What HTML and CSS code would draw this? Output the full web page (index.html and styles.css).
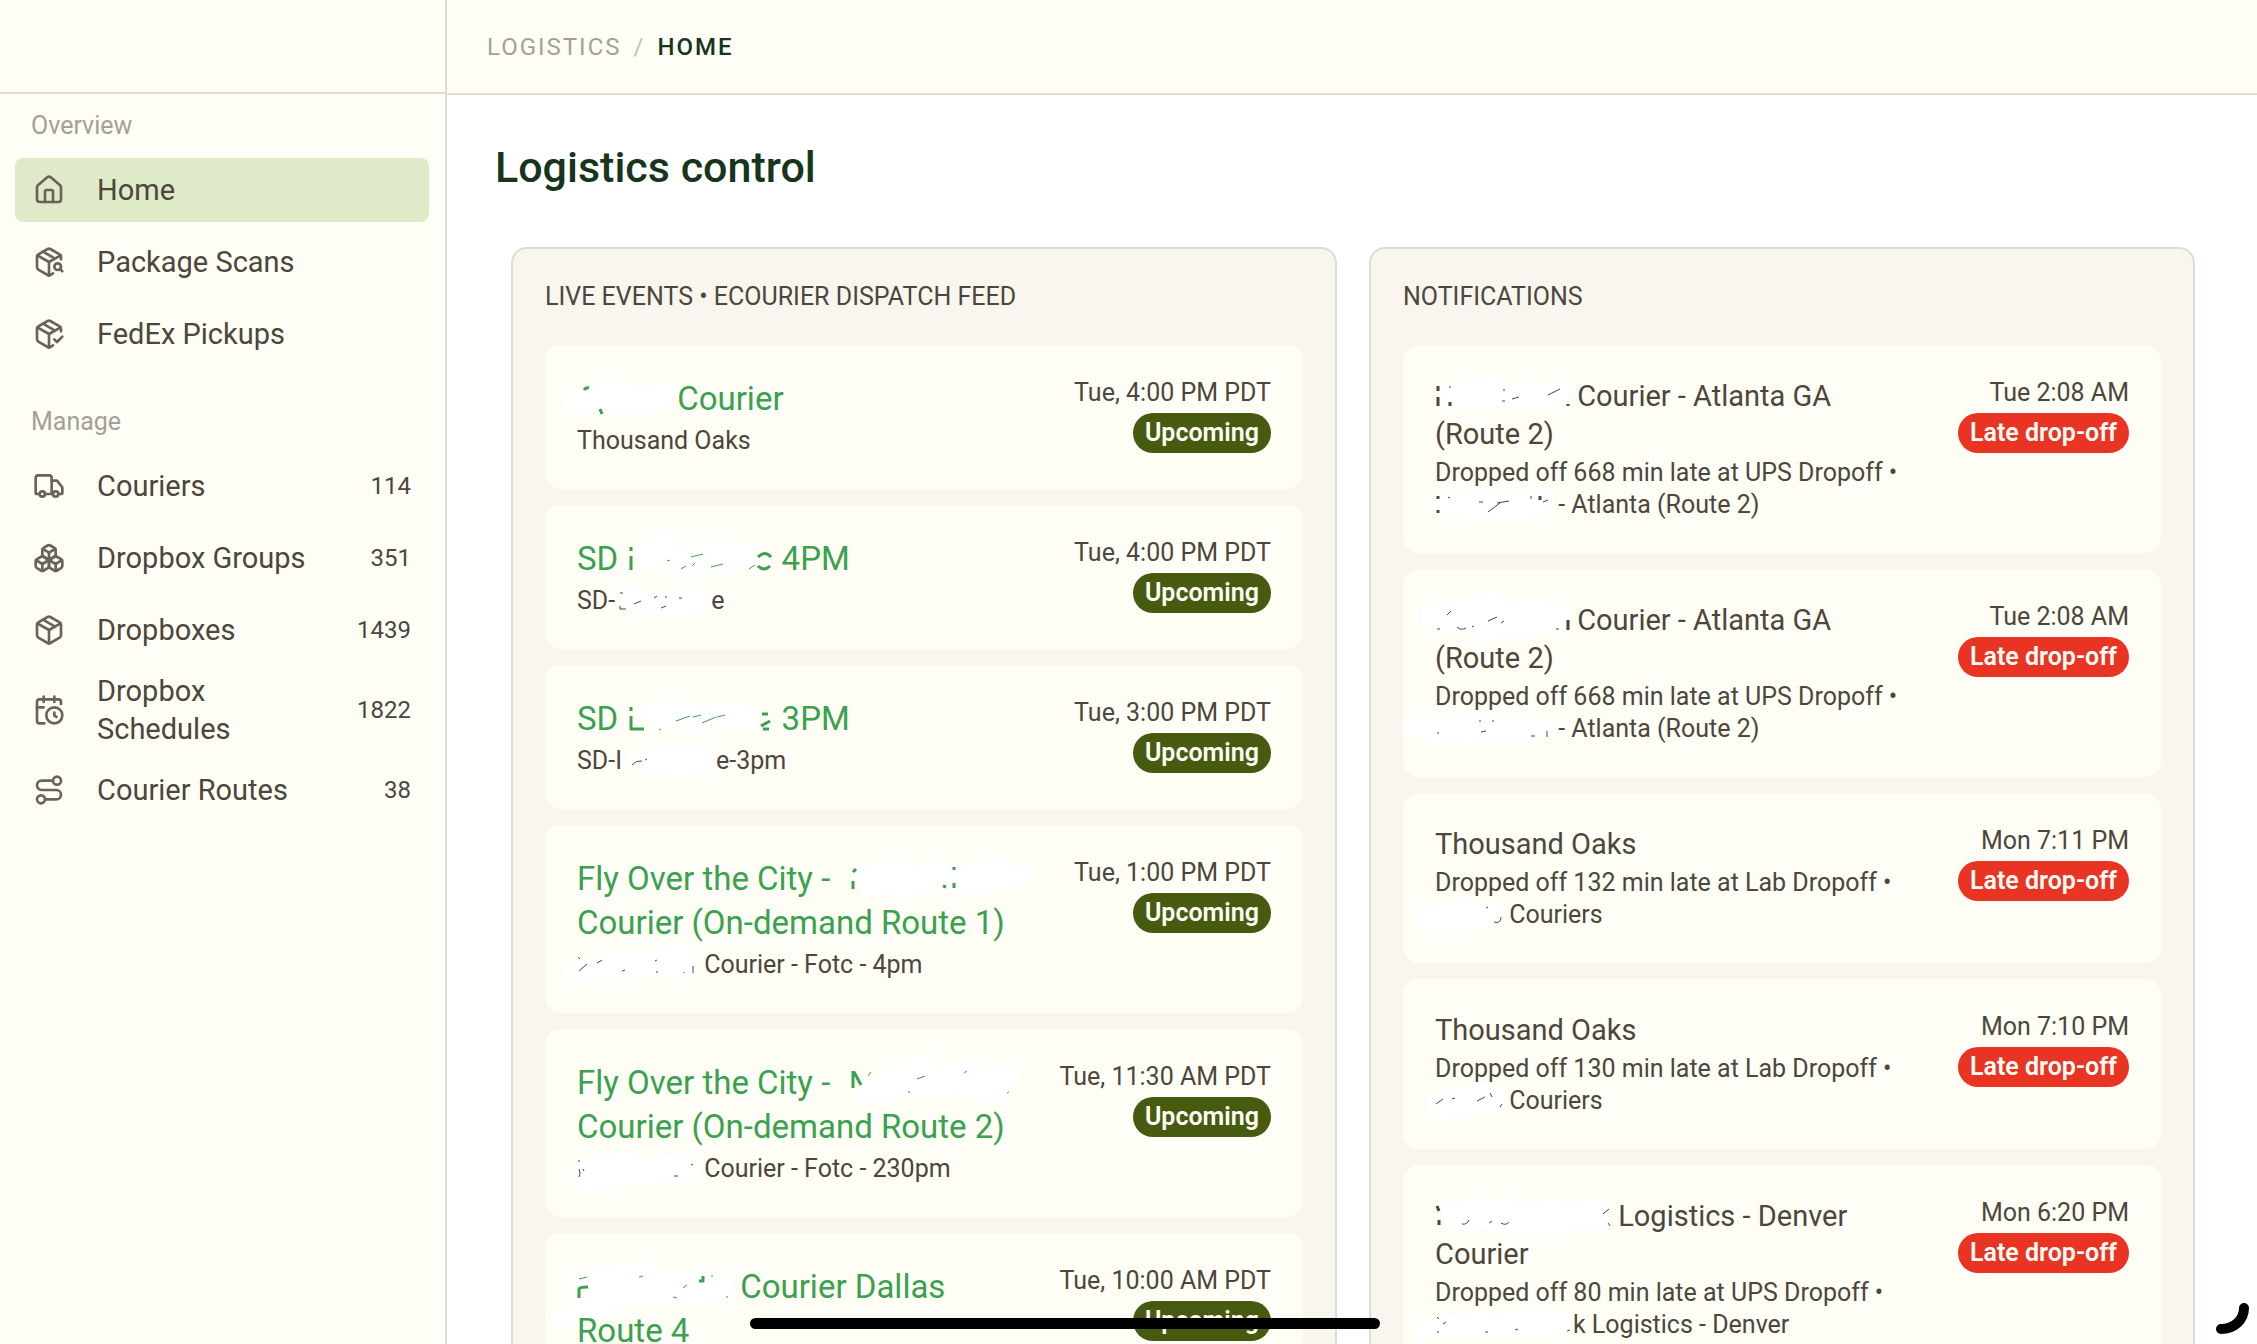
FILE: index.html
```html
<!DOCTYPE html>
<html lang="en">
<head>
    <meta charset="UTF-8">
    <meta name="viewport" content="width=device-width, initial-scale=1.0">
    <title>Logistics control</title>
    <link rel="stylesheet" href="styles.css">
</head>
<body>
    <aside class="sidebar">
        <div class="sidebar-head"></div>
        <nav class="menu">
            <h2 class="menu-title">Overview</h2>
            <a class="menu-item active" href="#home">
                <svg class="icon" viewBox="0 0 24 24"><path d="M15 21v-8a1 1 0 0 0-1-1h-4a1 1 0 0 0-1 1v8"/><path d="M3 10a2 2 0 0 1 .709-1.528l7-6a2 2 0 0 1 2.582 0l7 6A2 2 0 0 1 21 10v9a2 2 0 0 1-2 2H5a2 2 0 0 1-2-2z"/></svg>
                <span class="menu-label">Home</span>
            </a>
            <a class="menu-item" href="#scans">
                <svg class="icon" viewBox="0 0 24 24"><path d="M21 10V8a2 2 0 0 0-1-1.73l-7-4a2 2 0 0 0-2 0l-7 4A2 2 0 0 0 3 8v8a2 2 0 0 0 1 1.73l7 4a2 2 0 0 0 2 0l2-1.14"/><path d="m7.5 4.27 9 5.15"/><path d="M3.29 7 12 12l8.71-5"/><path d="M12 22V12"/><circle cx="18.5" cy="15.5" r="2.5"/><path d="M20.27 17.27 22 19"/></svg>
                <span class="menu-label">Package Scans</span>
            </a>
            <a class="menu-item" href="#pickups">
                <svg class="icon" viewBox="0 0 24 24"><path d="m16 16 2 2 4-4"/><path d="M21 10V8a2 2 0 0 0-1-1.73l-7-4a2 2 0 0 0-2 0l-7 4A2 2 0 0 0 3 8v8a2 2 0 0 0 1 1.73l7 4a2 2 0 0 0 2 0l2-1.14"/><path d="m7.5 4.27 9 5.15"/><path d="M3.29 7 12 12l8.71-5"/><path d="M12 22V12"/></svg>
                <span class="menu-label">FedEx Pickups</span>
            </a>

            <h2 class="menu-title">Manage</h2>
            <a class="menu-item" href="#couriers">
                <svg class="icon" viewBox="0 0 24 24"><path d="M14 18V6a2 2 0 0 0-2-2H4a2 2 0 0 0-2 2v11a1 1 0 0 0 1 1h2"/><path d="M15 18H9"/><path d="M19 18h2a1 1 0 0 0 1-1v-3.65a1 1 0 0 0-.22-.624l-3.48-4.35A1 1 0 0 0 17.52 8H14"/><circle cx="17" cy="18" r="2"/><circle cx="7" cy="18" r="2"/></svg>
                <span class="menu-label">Couriers</span>
                <span class="menu-count">114</span>
            </a>
            <a class="menu-item" href="#groups">
                <svg class="icon" viewBox="0 0 24 24"><path d="M2.97 12.92A2 2 0 0 0 2 14.63v3.24a2 2 0 0 0 .97 1.71l3 1.8a2 2 0 0 0 2.06 0L12 19v-5.5l-5-3-4.03 2.42Z"/><path d="m7 16.5-4.74-2.85"/><path d="m7 16.5 5-3"/><path d="M7 16.5v5.17"/><path d="M12 13.5V19l3.97 2.38a2 2 0 0 0 2.06 0l3-1.8a2 2 0 0 0 .97-1.71v-3.24a2 2 0 0 0-.97-1.71L17 10.5l-5 3Z"/><path d="m17 16.5-5-3"/><path d="m17 16.5 4.74-2.85"/><path d="M17 16.5v5.17"/><path d="M7.97 4.42A2 2 0 0 0 7 6.13v4.37l5 3 5-3V6.13a2 2 0 0 0-.97-1.71l-3-1.8a2 2 0 0 0-2.06 0l-3 1.8Z"/><path d="M12 8 7.26 5.15"/><path d="m12 8 4.74-2.85"/><path d="M12 13.5V8"/></svg>
                <span class="menu-label">Dropbox Groups</span>
                <span class="menu-count">351</span>
            </a>
            <a class="menu-item" href="#dropboxes">
                <svg class="icon" viewBox="0 0 24 24"><path d="M11 21.73a2 2 0 0 0 2 0l7-4A2 2 0 0 0 21 16V8a2 2 0 0 0-1-1.73l-7-4a2 2 0 0 0-2 0l-7 4A2 2 0 0 0 3 8v8a2 2 0 0 0 1 1.73z"/><path d="M12 22V12"/><path d="M3.29 7 12 12l8.71-5"/><path d="m7.5 4.27 9 5.15"/></svg>
                <span class="menu-label">Dropboxes</span>
                <span class="menu-count">1439</span>
            </a>
            <a class="menu-item" href="#schedules">
                <svg class="icon" viewBox="0 0 24 24"><path d="M21 7.5V6a2 2 0 0 0-2-2H5a2 2 0 0 0-2 2v14a2 2 0 0 0 2 2h3.5"/><path d="M16 2v4"/><path d="M8 2v4"/><path d="M3 10h5"/><path d="M16 14v2.2l1.6 1"/><circle cx="16" cy="16" r="6"/></svg>
                <span class="menu-label">Dropbox Schedules</span>
                <span class="menu-count">1822</span>
            </a>
            <a class="menu-item" href="#routes">
                <svg class="icon" viewBox="0 0 24 24"><circle cx="6" cy="19" r="3"/><path d="M9 19h8.5a3.5 3.5 0 0 0 0-7h-11a3.5 3.5 0 0 1 0-7H15"/><circle cx="18" cy="5" r="3"/></svg>
                <span class="menu-label">Courier Routes</span>
                <span class="menu-count">38</span>
            </a>
        </nav>
    </aside>

    <div class="page">
        <header class="topbar">
            <a class="crumb" href="#logistics">LOGISTICS</a>
            <span class="crumb-sep">/</span>
            <span class="crumb-current">HOME</span>
        </header>

        <main class="content">
            <h1>Logistics control</h1>
            <div class="panels">
                <section class="panel events">
                    <h2 class="panel-title">LIVE EVENTS • ECOURIER DISPATCH FEED</h2>

                    <article class="card">
                        <div class="card-text">
                            <h3><svg class="redact" width="92" height="23"><path class="smudge" d="M-4 15L45 2L14 18L92 5L40 16L84 16"/><path class="ink" d="M7 3q2-3 5-2M23 22l2 5"/></svg> Courier</h3>
                            <p>Thousand Oaks</p>
                        </div>
                        <div class="card-side">
                            <time>Tue, 4:00 PM PDT</time>
                            <span class="badge">Upcoming</span>
                        </div>
                    </article>

                    <article class="card">
                        <div class="card-text">
                            <h3>SD <svg class="redact" width="147" height="23" viewBox="-3 0 147 23"><path class="smudge" d="M15 7L38-8L20 14L82 4L40 18L118 4L66 18L116 14"/><path class="ink" d="M2 0v4M2 9v14M129 10q7-7 13 0M129 19q6 6 12 0"/><path class="ink thin" d="M38 14l3-1M52 22l5-3M62 10l12-3M63 19l3-3M82 20l12-3M120 22l6-4"/></svg> 4PM</h3>
                            <p>SD-<svg class="redact" width="96" height="17" viewBox="-2 0 96 17"><path class="smudge" d="M14 4L36 10L22 12L80 6L46 14L86 12"/><path class="ink thin" d="M3 1h3M3 14v3h6M17 12l7-3M37 6l3-2M48 5h2M62 6h3M44 16l5-2"/></svg>e</p>
                        </div>
                        <div class="card-side">
                            <time>Tue, 4:00 PM PDT</time>
                            <span class="badge">Upcoming</span>
                        </div>
                    </article>

                    <article class="card">
                        <div class="card-text">
                            <h3>SD <svg class="redact" width="147" height="23" viewBox="-3 0 147 23"><path class="smudge" d="M22 8L60 4L34 16L110 4L60 18L122 12"/><path class="ink" d="M2 0v4M2 9v13h13M133 7h6M132 19l9-5M134 22h6"/><path class="ink thin" d="M47 14l14-5M64 10l8-2M73 16l14-6M88 10l8-2M30 23l2-1"/></svg> 3PM</h3>
                            <p>SD-I<svg class="redact" width="94" height="17"><path class="smudge" d="M15 8L50 4L22 12L82 4L50 14L82 12"/><path class="ink thin" d="M10 13q4-5 10-4M23 8l2-1"/></svg>e-3pm</p>
                        </div>
                        <div class="card-side">
                            <time>Tue, 3:00 PM PDT</time>
                            <span class="badge">Upcoming</span>
                        </div>
                    </article>

                    <article class="card">
                        <div class="card-text">
                            <h3>Fly Over the City - <svg class="redact" width="172" height="23" viewBox="-13 0 172 23"><path class="smudge" d="M12 10L50 2L18 20L88 4L50 20L150 2L90 16L170 8L120 18"/><path class="ink" d="M2 5l3-3M2 14v8M92 19l3 1M103 0v3M103 16v5"/></svg> Courier (On-demand Route 1)</h3>
                            <p><svg class="redact" width="121" height="17"><path class="smudge" d="M-2 16L40 2L14 14L105-2L44 14L108 10"/><path class="ink thin" d="M1 1l2 2M2 15l8-7M20 7l5-3M45 15l3-1M79 16h2M78 5l2-1M107 16v1M116 10v7"/></svg> Courier - Fotc - 4pm</p>
                        </div>
                        <div class="card-side">
                            <time>Tue, 1:00 PM PDT</time>
                            <span class="badge">Upcoming</span>
                        </div>
                    </article>

                    <article class="card">
                        <div class="card-text">
                            <h3>Fly Over the City - <svg class="redact" width="172" height="23" viewBox="-13 0 172 23"><path class="smudge" d="M16 20L74-8L32 20L120-2L56 20L158 6L118 18L150 20"/><path class="ink" d="M2 0v17M3 1l7 13"/><path class="ink thin" d="M17 5l3-4M57 20l2 2M66 8l8-3M113 2l3-2M156 22l2-1"/></svg> Courier (On-demand Route 2)</h3>
                            <p><svg class="redact" width="121" height="17"><path class="smudge" d="M10 8L48 2L14 14L100 4L8 22L62 14L112 12"/><path class="ink thin" d="M1 1h2M2 9q2 4 0 8M6 9l1 2M97 16h4M114 5l2-1"/></svg> Courier - Fotc - 230pm</p>
                        </div>
                        <div class="card-side">
                            <time>Tue, 11:30 AM PDT</time>
                            <span class="badge">Upcoming</span>
                        </div>
                    </article>

                    <article class="card">
                        <div class="card-text">
                            <h3><svg class="redact" width="155" height="23"><path class="smudge" d="M-2 6L70-4L16 20L130 0L40 22L146 10L90 22L148 16M-16 42L30 28"/><path class="ink" d="M2 23v-9q1-2 9-2M126 1v5h-4"/><path class="ink thin" d="M2 4l8-2M62 2l4-1M96 22l4 1M106 13l4-3M134 1h2M149 22h2"/></svg> Courier Dallas Route 4</h3>
                        </div>
                        <div class="card-side">
                            <time>Tue, 10:00 AM PDT</time>
                            <span class="badge">Upcoming</span>
                        </div>
                    </article>
                </section>

                <section class="panel notifications">
                    <h2 class="panel-title">NOTIFICATIONS</h2>

                    <article class="card">
                        <div class="card-text">
                            <h3><svg class="redact" width="135" height="20"><path class="smudge" d="M16 8L60 0L20 16L90 4L60 16L126 4L96 16L122 12"/><path class="ink" d="M3 0v5M3 11v9M15 16v4M133 18v2"/><path class="ink thin" d="M68 4h2M67 15h3M77 13l7-2M113 9l12-6M14 1h2"/></svg> Courier - Atlanta GA (Route 2)</h3>
                            <p>Dropped off 668 min late at UPS Dropoff • <svg class="redact" width="117" height="17"><path class="smudge" d="M10 8L60 4L20 12L108 4L40 18L104 12"/><path class="ink" d="M3 0v3M3 14v3M105 0v4"/><path class="ink thin" d="M13 1l2 1M44 6h4M53 16l12-9M62 7l12-2M96 0v3M108 6l5-2"/></svg> - Atlanta (Route 2)</p>
                        </div>
                        <div class="card-side">
                            <time>Tue 2:08 AM</time>
                            <span class="badge late">Late drop-off</span>
                        </div>
                    </article>

                    <article class="card">
                        <div class="card-text">
                            <h3><svg class="redact" width="135" height="20"><path class="smudge" d="M-4 6L60-8L8 12L106-2L40 18L126 4L50 20L118 14"/><path class="ink" d="M133 10v10"/><path class="ink thin" d="M2 19h3M12 5l4-4M22 17q4 4 9 1M37 17l2-1M53 11l9-4M66 13l3-2M121 19h3"/></svg> Courier - Atlanta GA (Route 2)</h3>
                            <p>Dropped off 668 min late at UPS Dropoff • <svg class="redact" width="117" height="17"><path class="smudge" d="M-22 8L60 4L-2 14L88 6L30 14L108 8L90 12"/><path class="ink thin" d="M45 0v2M58 0v2M3 12v2M46 12l5-1M96 16h4M112 11v6"/></svg> - Atlanta (Route 2)</p>
                        </div>
                        <div class="card-side">
                            <time>Tue 2:08 AM</time>
                            <span class="badge late">Late drop-off</span>
                        </div>
                    </article>

                    <article class="card">
                        <div class="card-text">
                            <h3>Thousand Oaks</h3>
                            <p>Dropped off 132 min late at Lab Dropoff • <svg class="redact" width="68" height="17"><path class="smudge" d="M-8 12L40 2L8 16L58 6L40 14"/><path class="ink thin" d="M59 16q7 2 7-5M51 2l2-1"/></svg> Couriers</p>
                        </div>
                        <div class="card-side">
                            <time>Mon 7:11 PM</time>
                            <span class="badge late">Late drop-off</span>
                        </div>
                    </article>

                    <article class="card">
                        <div class="card-text">
                            <h3>Thousand Oaks</h3>
                            <p>Dropped off 130 min late at Lab Dropoff • <svg class="redact" width="68" height="17"><path class="smudge" d="M2 12L44 2L4 18L60 4L30 14L62 12"/><path class="ink thin" d="M1 12l7-5M17 7l3-1M42 9l8-4M55 1l2 4M65 15l2-3"/></svg> Couriers</p>
                        </div>
                        <div class="card-side">
                            <time>Mon 7:10 PM</time>
                            <span class="badge late">Late drop-off</span>
                        </div>
                    </article>

                    <article class="card">
                        <div class="card-text">
                            <h3><svg class="redact" width="176" height="20"><path class="smudge" d="M14 6L70 2L20 14L120 4L60 18L160 4L90 20L164 12"/><path class="ink" d="M2 0l2 5M4 14v5"/><path class="ink thin" d="M27 18q5 1 7-4M54 17l3-2M66 17q5 3 8-1M168 8l6-5M173 17l2 3"/></svg> Logistics - Denver Courier</h3>
                            <p>Dropped off 80 min late at UPS Dropoff • <svg class="redact" width="138" height="17"><path class="smudge" d="M-10 14L50 4L10 14L110 2L60 14L128 6L100 14"/><path class="ink thin" d="M2 1l2 2M3 15v2M8 8l3-2M50 16h3M80 14l3-1M132 15l3-1"/></svg>k Logistics - Denver</p>
                        </div>
                        <div class="card-side">
                            <time>Mon 6:20 PM</time>
                            <span class="badge late">Late drop-off</span>
                        </div>
                    </article>
                </section>
            </div>
        </main>
    </div>

    <div class="home-bar"></div>
    <svg class="corner-mark" viewBox="0 0 34 32"><path d="M28 5C28 17 18 26 5 26"/></svg>
</body>
</html>
```
FILE: styles.css
```css
* {
    box-sizing: border-box;
}

body {
    display: flex;
    height: 100vh;
    margin: 0;
    overflow: hidden;
    font-family: Roboto, sans-serif;
    font-size: 25px;
    line-height: 32px;
    color: #4c463b;
    background-color: #fff;
}

h1, h2, h3, p {
    margin: 0;
    font-weight: 400;
}

a {
    color: inherit;
    text-decoration: none;
}

/* Sidebar */
.sidebar {
    flex: 0 0 447px;
    background-color: #fffef6;
    border-right: 2px solid #dfdbd4;
}

.sidebar-head {
    height: 94px;
    border-bottom: 2px solid #dfdbd4;
}

.menu {
    display: flex;
    flex-direction: column;
    gap: 8px;
    padding: 8px 16px 8px 15px;
}

.menu-title {
    padding: 8px 16px;
    font-size: 25px;
    color: #a5a097;
}

.menu-item + .menu-title {
    margin-top: 24px;
}

.menu-item {
    display: flex;
    align-items: center;
    gap: 32px;
    min-height: 64px;
    padding: 2px 18px;
    border-radius: 8px;
    font-size: 29px;
    line-height: 38px;
}

.menu-item.active {
    background-color: #dfebc8;
}

.menu-label {
    flex: 1;
}

.menu-count {
    font-size: 24px;
}

.icon {
    flex: none;
    width: 32px;
    height: 32px;
    fill: none;
    stroke: #6a6458;
    stroke-width: 2;
    stroke-linecap: round;
    stroke-linejoin: round;
}

/* Page */
.page {
    flex: 1;
    min-width: 0;
}

.topbar {
    display: flex;
    align-items: center;
    gap: 12px;
    height: 95px;
    padding: 0 40px;
    border-bottom: 2px solid #dfdbd4;
    background-color: #fffef6;
    font-size: 24px;
    letter-spacing: 2px;
}

.crumb {
    color: #a5a097;
}

.crumb-sep {
    color: #c4c0b8;
}

.crumb-current {
    font-weight: 500;
    color: #17351c;
}

.content {
    padding: 48px;
}

h1 {
    font-size: 43px;
    font-weight: 500;
    line-height: 48px;
    color: #17351c;
}

.panels {
    display: grid;
    grid-template-columns: 1fr 1fr;
    gap: 32px;
    margin-top: 56px;
    padding: 0 14px 0 16px;
}

.panel {
    padding: 32px;
    border: 2px solid #dfdbd4;
    border-radius: 16px;
    background-color: #f9f6f0;
}

.panel-title {
    margin-bottom: 32px;
    font-size: 25px;
}

.card {
    display: flex;
    justify-content: space-between;
    gap: 24px;
    margin-bottom: 16px;
    padding: 32px;
    border-radius: 16px;
    background-color: #fffef6;
}

.notifications .card {
    gap: 40px;
}

.card h3 {
    margin-bottom: 4px;
    font-size: 29px;
    line-height: 38px;
}

.events h3 {
    font-size: 33px;
    line-height: 44px;
    color: #3aa14f;
}

.card-side {
    display: flex;
    flex: none;
    flex-direction: column;
    align-items: flex-end;
    gap: 4px;
}

.badge {
    padding: 4px 12px;
    border-radius: 20px;
    background-color: #475b10;
    font-weight: 600;
    color: #fffef6;
}

.badge.late {
    background-color: #e93323;
}

/* Names painted over by hand */
.redact {
    overflow: visible;
    fill: none;
    stroke-linecap: round;
    stroke-linejoin: round;
}

.smudge {
    stroke: #fff;
    stroke-width: 20;
}

.ink {
    stroke: currentColor;
    stroke-width: 3;
    stroke-linecap: butt;
}

.ink.thin {
    stroke-width: 1;
}

/* Over the page */
.home-bar {
    position: fixed;
    bottom: 15px;
    left: 750px;
    width: 630px;
    height: 11px;
    border-radius: 6px;
    background-color: #000;
}

.corner-mark {
    position: fixed;
    right: 7px;
    bottom: 9px;
    width: 34px;
    height: 32px;
    fill: none;
    stroke: #000;
    stroke-width: 10;
    stroke-linecap: round;
}
```
